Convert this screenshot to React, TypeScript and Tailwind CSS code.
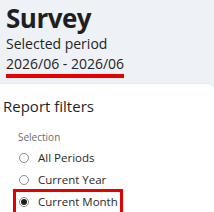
export default function App() {
  return (
    <div className="w-[214px] h-[212px] overflow-hidden bg-[#eef2f6] font-['Open_Sans',sans-serif] text-[#1f1f1f]">
      <div className="px-[6px] pt-[2px]">
        <h1 className="text-[26px] leading-[32px] font-bold tracking-[-0.5px]">Survey</h1>
        <div className="text-[14px] leading-[20px] text-[#242424]">Selected period</div>
        <div className="w-fit text-[14px] leading-[20px] text-[#242424] border-b-4 border-[#e50000]">
          2026/06 - 2026/06
        </div>
      </div>
      <div className="mt-[6px] h-[200px] bg-white rounded-tr-[6px] shadow-[0_0_3px_rgba(0,0,0,0.08)] pl-[3px] pt-[12px]">
        <h2 className="text-[15px] leading-[20px] text-[#1f1f1f]">Report filters</h2>
        <div className="pl-[16px] pt-[14px]">
          <div className="-ml-[1px] text-[10px] leading-[14px] text-[#6b6b6b]">Selection</div>
          <div className="flex flex-col mt-[6px]">
            <Radio label="All Periods" />
            <div className="mt-[6px]">
              <Radio label="Current Year" />
            </div>
            <div className="mt-[1px] -ml-[6px] w-[110px] border-[3px] border-[#e50000] pl-[3px] pt-[2px] pb-[2px]">
              <Radio label="Current Month" checked />
            </div>
          </div>
        </div>
      </div>
    </div>
  );
}

function Radio({ label, checked = false }: { label: string; checked?: boolean }) {
  return (
    <div className="flex items-center gap-[9px] h-[16px] whitespace-nowrap">
      <span className="w-[10px] h-[10px] rounded-full border border-[#8a8a8a] bg-white flex items-center justify-center shrink-0">
        {checked && <span className="w-[6px] h-[6px] rounded-full bg-[#1f1f1f]" />}
      </span>
      <span className="text-[11.5px] leading-[16px] text-[#2a2a2a]">{label}</span>
    </div>
  );
}
